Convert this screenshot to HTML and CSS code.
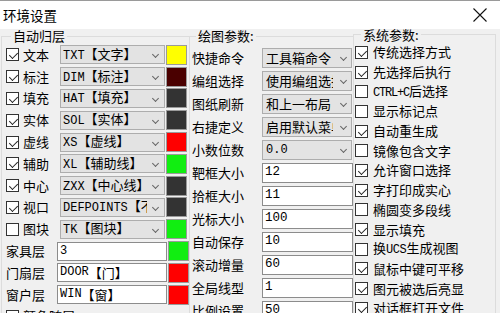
FILE: index.html
```html
<!DOCTYPE html>
<html lang="zh-CN">
<head>
<meta charset="utf-8">
<title>环境设置</title>
<link rel="stylesheet" href="styles.css">
</head>
<body>
<div class="window">
  <div class="titlebar">
    <span class="title">环境设置</span>
    <svg class="close" width="14" height="14" viewBox="0 0 14 14"><path d="M0.5 0.5 L13.5 13.5 M13.5 0.5 L0.5 13.5" stroke="#111" stroke-width="1.1" fill="none"/></svg>
  </div>
  <div class="main">
    <fieldset class="group left">
      <legend>自动归层</legend>
      <div class="lrow"><span class="cb on"></span><span class="llabel">文本</span><span class="combo lcombo"><span class="ctext"><span class="code">TXT</span>【文字】</span><span class="chev"></span></span><span class="swatch" style="background:#ffff00"></span></div>
      <div class="lrow"><span class="cb on"></span><span class="llabel">标注</span><span class="combo lcombo"><span class="ctext"><span class="code">DIM</span>【标注】</span><span class="chev"></span></span><span class="swatch" style="background:#4a0000"></span></div>
      <div class="lrow"><span class="cb on"></span><span class="llabel">填充</span><span class="combo lcombo"><span class="ctext"><span class="code">HAT</span>【填充】</span><span class="chev"></span></span><span class="swatch" style="background:#333333"></span></div>
      <div class="lrow"><span class="cb on"></span><span class="llabel">实体</span><span class="combo lcombo"><span class="ctext"><span class="code">SOL</span>【实体】</span><span class="chev"></span></span><span class="swatch" style="background:#333333"></span></div>
      <div class="lrow"><span class="cb on"></span><span class="llabel">虚线</span><span class="combo lcombo"><span class="ctext"><span class="code">XS</span>【虚线】</span><span class="chev"></span></span><span class="swatch" style="background:#ff0000"></span></div>
      <div class="lrow"><span class="cb on"></span><span class="llabel">辅助</span><span class="combo lcombo"><span class="ctext"><span class="code">XL</span>【辅助线】</span><span class="chev"></span></span><span class="swatch" style="background:#11ee11"></span></div>
      <div class="lrow"><span class="cb on"></span><span class="llabel">中心</span><span class="combo lcombo"><span class="ctext"><span class="code">ZXX</span>【中心线】</span><span class="chev"></span></span><span class="swatch" style="background:#333333"></span></div>
      <div class="lrow"><span class="cb on"></span><span class="llabel">视口</span><span class="combo lcombo"><span class="ctext"><span class="code">DEFPOINTS</span>【不打印】</span><span class="chev"></span></span><span class="swatch" style="background:#333333"></span></div>
      <div class="lrow"><span class="cb"></span><span class="llabel">图块</span><span class="combo lcombo"><span class="ctext"><span class="code">TK</span>【图块】</span><span class="chev"></span></span><span class="swatch" style="background:#11ee11"></span></div>
      <div class="lrow irow"><span class="ilabel">家具层</span><span class="input linput"><span class="code">3</span></span><span class="swatch" style="background:#11ee11"></span></div>
      <div class="lrow irow"><span class="ilabel">门扇层</span><span class="input linput"><span class="code">DOOR</span>【门】</span><span class="swatch" style="background:#ff0000"></span></div>
      <div class="lrow irow"><span class="ilabel">窗户层</span><span class="input linput"><span class="code">WIN</span>【窗】</span><span class="swatch" style="background:#ff0000"></span></div>
      <div class="lrow"><span class="cb on"></span><span class="llabel wide">颜色随层</span></div>
    </fieldset>
    <fieldset class="group mid">
      <legend>绘图参数:</legend>
      <div class="mrow"><span class="mlabel">快捷命令</span><span class="combo mcombo"><span class="mtext">工具箱命令</span><span class="chev"></span></span></div>
      <div class="mrow"><span class="mlabel">编组选择</span><span class="combo mcombo"><span class="mtext">使用编组选择</span><span class="chev"></span></span></div>
      <div class="mrow"><span class="mlabel">图纸刷新</span><span class="combo mcombo"><span class="mtext">和上一布局</span><span class="chev"></span></span></div>
      <div class="mrow"><span class="mlabel">右捷定义</span><span class="combo mcombo"><span class="mtext">启用默认菜单</span><span class="chev"></span></span></div>
      <div class="mrow"><span class="mlabel">小数位数</span><span class="combo mcombo"><span class="mtext code">0.0</span><span class="chev"></span></span></div>
      <div class="mrow"><span class="mlabel">靶框大小</span><span class="input minput code">12</span></div>
      <div class="mrow"><span class="mlabel">拾框大小</span><span class="input minput code">11</span></div>
      <div class="mrow"><span class="mlabel">光标大小</span><span class="input minput code">100</span></div>
      <div class="mrow"><span class="mlabel">自动保存</span><span class="input minput code">10</span></div>
      <div class="mrow"><span class="mlabel">滚动增量</span><span class="input minput code">60</span></div>
      <div class="mrow"><span class="mlabel">全局线型</span><span class="input minput code">1</span></div>
      <div class="mrow"><span class="mlabel">比例设置</span><span class="input minput code">50</span></div>
    </fieldset>
    <fieldset class="group right">
      <legend>系统参数:</legend>
      <div class="rrow"><span class="cb on"></span><span class="rlabel">传统选择方式</span></div>
      <div class="rrow"><span class="cb on"></span><span class="rlabel">先选择后执行</span></div>
      <div class="rrow"><span class="cb"></span><span class="rlabel"><span class="code narrow">CTRL+C</span>后选择</span></div>
      <div class="rrow"><span class="cb"></span><span class="rlabel">显示标记点</span></div>
      <div class="rrow"><span class="cb on"></span><span class="rlabel">自动重生成</span></div>
      <div class="rrow"><span class="cb"></span><span class="rlabel">镜像包含文字</span></div>
      <div class="rrow"><span class="cb on"></span><span class="rlabel">允许窗口选择</span></div>
      <div class="rrow"><span class="cb on"></span><span class="rlabel">字打印成实心</span></div>
      <div class="rrow"><span class="cb"></span><span class="rlabel">椭圆变多段线</span></div>
      <div class="rrow"><span class="cb on"></span><span class="rlabel">显示填充</span></div>
      <div class="rrow"><span class="cb"></span><span class="rlabel">换<span class="code ucs">UCS</span>生成视图</span></div>
      <div class="rrow"><span class="cb on"></span><span class="rlabel">鼠标中键可平移</span></div>
      <div class="rrow"><span class="cb on"></span><span class="rlabel">图元被选后亮显</span></div>
      <div class="rrow"><span class="cb on"></span><span class="rlabel">对话框打开文件</span></div>
    </fieldset>
  </div>
</div>
</body>
</html>
```

FILE: styles.css
```css
* { box-sizing: border-box; }
html, body { margin: 0; padding: 0; }
body {
  width: 500px;
  height: 313px;
  overflow: hidden;
  background: #f0f0f0;
  font-family: "Noto Sans CJK SC", "Microsoft YaHei", sans-serif;
  font-size: 13px;
  color: #000;
}
.window { width: 500px; height: 313px; overflow: hidden; }

.titlebar {
  height: 29px;
  background: #fff;
  border-top: 1px solid #9a9a9a;
  display: flex;
  align-items: center;
  justify-content: space-between;
  padding: 0 13px 0 3px;
}
.title { font-size: 13.5px; line-height: 16px; }
.close { display: block; }

.main { display: flex; align-items: flex-start; }

.group {
  margin: -1px 0 0 0;
  padding: 0;
  min-width: 0;
  border: 1px solid #dcdcdc;
  border-bottom: none;
  height: 300px;
}
.group legend {
  padding: 0 2px;
  line-height: 16px;
  font-size: 13px;
}
.left { width: 188px; margin-left: 1px; border-right: none; }
.left legend { margin-left: 9px; }
.mid { width: 164px; border-right: none; padding-top: 2px; }
.mid legend { margin-left: 6px; }
.right { width: 143px; margin-top: -2.5px; }
.right legend { margin-left: 7px; }

.code { font-family: "Liberation Mono", monospace; font-size: 12px; }

/* checkbox */
.cb {
  flex: none;
  width: 13px;
  height: 13px;
  border: 1px solid #333;
  background: #fff;
  position: relative;
}
.cb.on::after {
  content: "";
  position: absolute;
  left: 2px;
  top: 1px;
  width: 7px;
  height: 4px;
  border-left: 1.2px solid #222;
  border-bottom: 1.2px solid #222;
  transform: translate(0.5px, 2px) rotate(-45deg);
}

/* left column */
.lrow {
  height: 21.8px;
  display: flex;
  align-items: center;
  padding-left: 4px;
  white-space: nowrap;
}
.llabel { width: 37px; margin-left: 4px; line-height: 16px; }
.llabel.wide { width: auto; }
.ilabel { width: 52px; line-height: 16px; }

.combo {
  flex: none;
  display: flex;
  align-items: center;
  background: #e3e3e3;
  border: 1px solid #adadad;
  height: 19px;
  position: relative;
  white-space: nowrap;
  overflow: hidden;
}
.lcombo { width: 105px; padding-left: 2px; }
.ctext { width: 84px; overflow: hidden; line-height: 17px; }
.chev {
  position: absolute;
  right: 6px;
  top: 6px;
  width: 5px;
  height: 5px;
  border-right: 1px solid #666;
  border-bottom: 1px solid #666;
  transform: rotate(45deg);
}

.input {
  flex: none;
  display: flex;
  align-items: center;
  background: #fff;
  border: 1px solid #8c8c8c;
  height: 19px;
  padding-left: 2px;
  white-space: nowrap;
  overflow: hidden;
  line-height: 17px;
}
.linput { width: 110px; }

.swatch {
  flex: none;
  width: 21px;
  height: 20px;
  margin-left: 1px;
  border: 1px solid #9a9a9a;
}

/* middle column */
.mrow {
  height: 23px;
  display: flex;
  align-items: center;
  white-space: nowrap;
}
.mlabel { width: 72px; padding-left: 2px; line-height: 16px; }
.mcombo { width: 90px; height: 20px; padding-left: 3px; }
.mtext { width: 67px; overflow: hidden; line-height: 18px; }
.mcombo .chev { right: 5px; top: 6px; }
.minput { width: 91px; height: 20px; font-size: 12.5px; }

/* right column */
.rrow {
  height: 19.7px;
  display: flex;
  align-items: center;
  padding-left: 1px;
  white-space: nowrap;
}
.rlabel { margin-left: 5px; line-height: 16px; }
.narrow { letter-spacing: -1.2px; }
.ucs { letter-spacing: -0.4px; }
```
